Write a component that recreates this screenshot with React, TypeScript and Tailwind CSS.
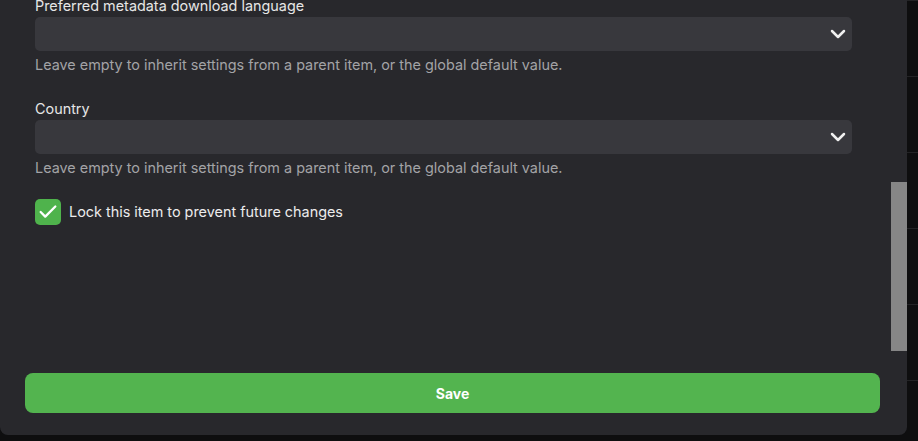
import { Check, ChevronDown } from "lucide-react";

// ── Field ────────────────────────────────────────────────────────────

function SelectField({ label }: { label: string }) {
	return (
		<div className="flex flex-col">
			<label className="mb-[1px] text-[14.4px] leading-5 text-[#e6e6e6]">{label}</label>
			<div className="flex h-[34px] items-center justify-end rounded-[5px] bg-[#38383d] pr-[2px]">
				<ChevronDown size={24} strokeWidth={2.5} className="text-[#f0f0f0]" />
			</div>
			<p className="mt-[4px] text-[14.4px] leading-5 text-[#a3a3a6]">
				Leave empty to inherit settings from a parent item, or the global default value.
			</p>
		</div>
	);
}

// ── Background rows peeking out beside the dialog ───────────────────

function BackdropStrip() {
	return (
		<div className="flex flex-1 flex-col">
			<div className="h-[22px] border-b border-[#232325]" />
			{[0, 1, 2, 3, 4, 5].map((i) => (
				<div key={i} className="h-[76px] shrink-0 border-b border-[#232325]" />
			))}
		</div>
	);
}

// ── Main ─────────────────────────────────────────────────────────────

export default function App() {
	return (
		<div
			className="flex h-[441px] w-[918px] overflow-hidden bg-[#0e0e0f]"
			style={{ fontFamily: "Inter, 'Noto Sans', sans-serif" }}
		>
			<div className="flex h-[435px] w-[907px] shrink-0 flex-col rounded-b-lg bg-[#28282c]">
				{/* Scroll area */}
				<div className="flex h-[352px] overflow-hidden">
					<div className="flex-1 pl-[35px] pr-[39px]">
						<div className="-mt-[4px] flex flex-col">
							<SelectField label="Preferred metadata download language" />
							<div className="mt-[24px]">
								<SelectField label="Country" />
							</div>
							<div className="mt-[21px] flex items-center gap-2">
								<div className="flex h-[26px] w-[26px] items-center justify-center rounded-[5px] bg-[#4fb34c]">
									<Check size={22} strokeWidth={2.5} className="text-white" />
								</div>
								<span className="text-[14.4px] leading-5 text-[#ececec]">
									Lock this item to prevent future changes
								</span>
							</div>
						</div>
					</div>
					<div className="w-4">
						<div className="mt-[182px] h-[169px] bg-[#868686]" />
					</div>
				</div>

				{/* Footer */}
				<div className="pl-[25px] pr-[27px] pt-[21px]">
					<button className="flex h-10 w-full items-center justify-center rounded-lg bg-[#53b44f] text-[14px] font-bold text-white">
						Save
					</button>
				</div>
			</div>
			<BackdropStrip />
		</div>
	);
}
